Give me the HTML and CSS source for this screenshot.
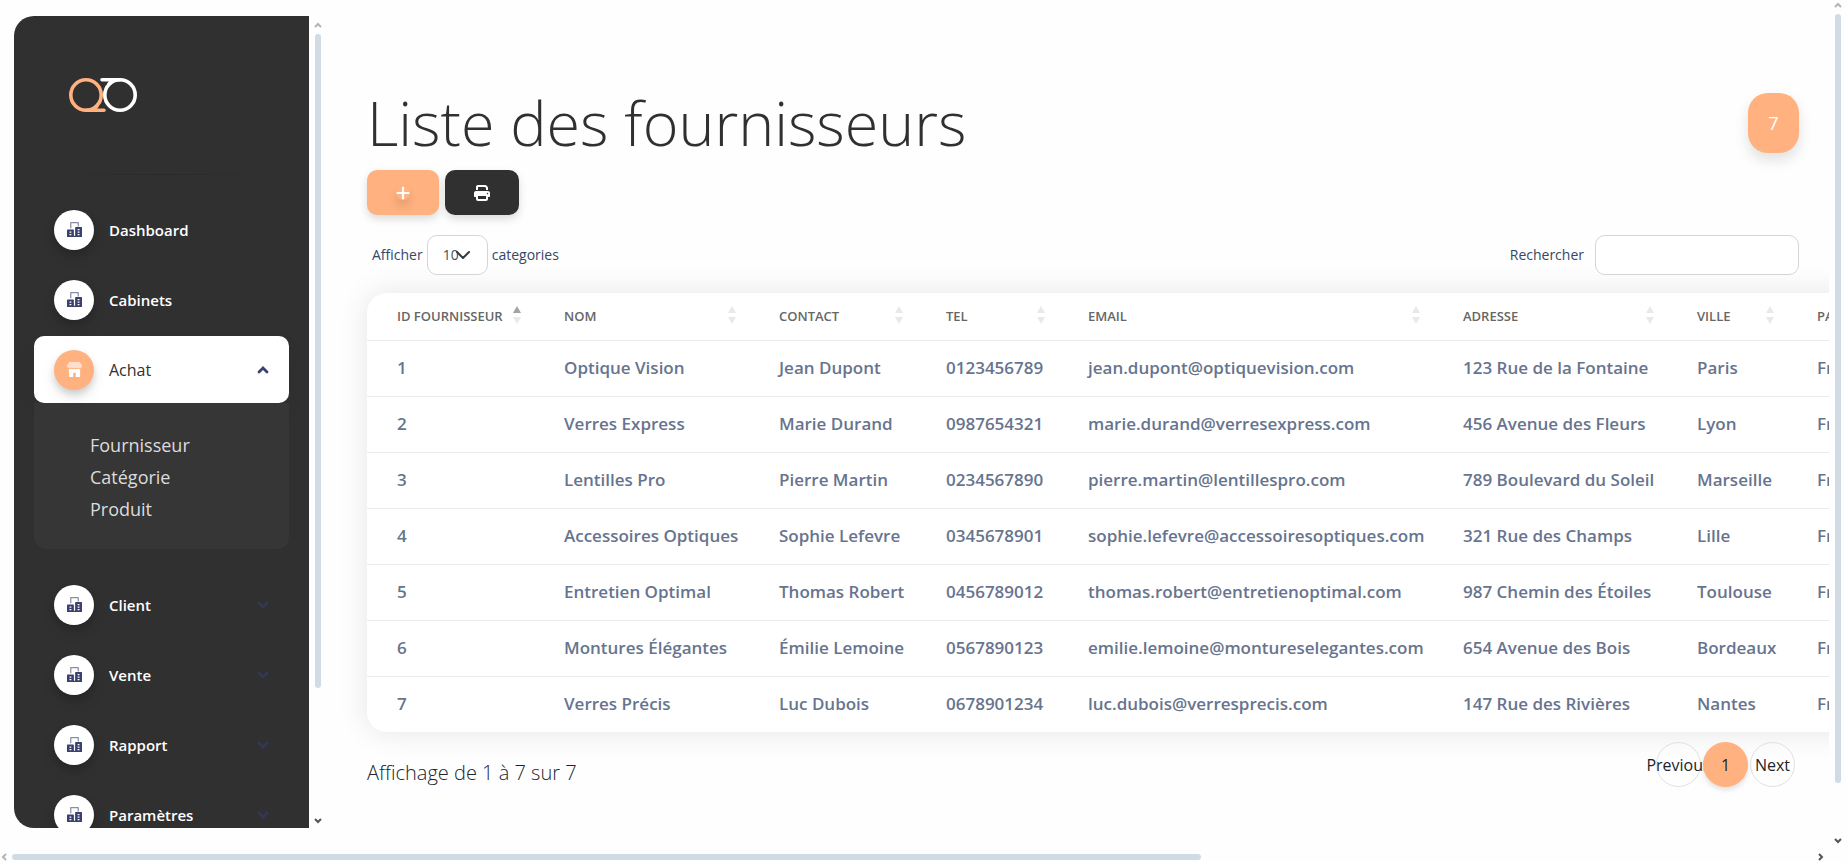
FILE: index.html
```html
<!DOCTYPE html>
<html lang="fr">
<head>
<meta charset="utf-8">
<title>Liste des fournisseurs</title>
<link rel="stylesheet" href="styles.css">
</head>
<body>
<svg class="defs" aria-hidden="true">
  <symbol id="office" viewBox="0 0 42 42">
    <path opacity=".6" d="M12.25,17.5 L8.75,17.5 L8.75,1.75 C8.75,0.78 9.53,0 10.5,0 L31.5,0 C32.47,0 33.25,0.78 33.25,1.75 L33.25,12.25 L29.75,12.25 L29.75,3.5 L12.25,3.5 Z"/>
    <path fill-rule="evenodd" d="M40.25,14 L24.5,14 C23.53,14 22.75,14.78 22.75,15.75 L22.75,38.5 L19.25,38.5 L19.25,22.75 C19.25,21.78 18.47,21 17.5,21 L1.75,21 C0.78,21 0,21.78 0,22.75 L0,40.25 C0,41.22 0.78,42 1.75,42 L40.25,42 C41.22,42 42,41.22 42,40.25 L42,15.75 C42,14.78 41.22,14 40.25,14 Z M12.25,36.75 L7,36.75 L7,33.25 L12.25,33.25 Z M12.25,29.75 L7,29.75 L7,26.25 L12.25,26.25 Z M35,36.75 L29.75,36.75 L29.75,33.25 L35,33.25 Z M35,29.75 L29.75,29.75 L29.75,26.25 L35,26.25 Z M35,22.75 L29.75,22.75 L29.75,19.25 L35,19.25 Z"/>
  </symbol>
  <symbol id="shop" viewBox="0 0 47 47">
    <path opacity=".6" d="M46.72,10.74 L40.84,0.95 C40.49,0.36 39.85,0 39.17,0 L7.83,0 C7.15,0 6.51,0.36 6.16,0.95 L0.28,10.74 C0.1,11.05 0,11.39 0,11.75 C0,16.07 3.48,19.57 7.8,19.58 C9.75,19.59 11.62,18.87 13.05,17.58 C16.02,20.26 20.53,20.26 23.49,17.58 C26.46,20.26 30.98,20.26 33.95,17.58 C36.24,19.65 39.54,20.17 42.37,18.91 C45.19,17.65 47,14.84 47,11.75 C47,11.39 46.9,11.05 46.72,10.74 Z"/>
    <path d="M39.2,22.49 C37.38,22.49 35.58,22.01 33.95,21.1 C31.14,22.68 27.93,22.93 24.98,21.8 C24.48,21.61 23.98,21.37 23.5,21.1 C20.7,22.69 17.48,22.93 14.54,21.8 C14.03,21.61 13.53,21.37 13.05,21.1 C11.43,22.02 9.63,22.49 7.82,22.49 C7.17,22.48 6.52,22.42 5.88,22.29 L5.88,44.72 C5.88,45.95 6.75,46.95 7.83,46.95 L19.58,46.95 L19.58,33.61 L27.42,33.61 L27.42,46.95 L39.17,46.95 C40.25,46.95 41.13,45.95 41.13,44.72 L41.13,22.28 C40.49,22.41 39.84,22.48 39.2,22.49 Z"/>
  </symbol>
  <symbol id="chevron" viewBox="0 0 12 8"><path d="M2 2 6 6 10 2" fill="none" stroke="currentColor" stroke-width="2.8" stroke-linecap="round"/></symbol>
  <symbol id="arrow" viewBox="0 0 8 6"><path d="M1 5 4 2 7 5" fill="none" stroke="currentColor" stroke-width="2"/></symbol>
  <symbol id="sort" viewBox="0 0 8 18"><path fill="var(--sort-up)" d="M0 7 4 0 8 7Z"/><path fill="var(--sort-down)" d="M0 11 4 18 8 11Z"/></symbol>
</svg>

<div class="page">
  <aside class="sidebar">
    <a class="brand" href="#" aria-label="Accueil">
      <svg class="logo" viewBox="0 0 68 34" fill="none" stroke-width="3.6" stroke-linecap="round">
        <circle cx="17" cy="17" r="15.2" stroke="#ffb17f"/>
        <path d="M17 32.2H35M28 28 25 31" stroke="#ffb17f"/>
        <circle cx="51" cy="17" r="15.2" stroke="#fff"/>
        <path d="M51 1.8H33M40 6 43 3" stroke="#fff"/>
      </svg>
    </a>
    <hr class="divider">
    <nav class="menu">
      <a class="item" href="#"><span class="badge-icon"><svg><use href="#office"/></svg></span>Dashboard</a>
      <a class="item" href="#"><span class="badge-icon"><svg><use href="#office"/></svg></span>Cabinets</a>
      <div class="group">
        <a class="item active" href="#"><span class="badge-icon"><svg><use href="#shop"/></svg></span>Achat<svg class="caret"><use href="#chevron"/></svg></a>
        <div class="submenu">
          <a href="#">Fournisseur</a>
          <a href="#">Catégorie</a>
          <a href="#">Produit</a>
        </div>
      </div>
      <a class="item" href="#"><span class="badge-icon"><svg><use href="#office"/></svg></span>Client<svg class="caret"><use href="#chevron"/></svg></a>
      <a class="item" href="#"><span class="badge-icon"><svg><use href="#office"/></svg></span>Vente<svg class="caret"><use href="#chevron"/></svg></a>
      <a class="item" href="#"><span class="badge-icon"><svg><use href="#office"/></svg></span>Rapport<svg class="caret"><use href="#chevron"/></svg></a>
      <a class="item" href="#"><span class="badge-icon"><svg><use href="#office"/></svg></span>Paramètres<svg class="caret"><use href="#chevron"/></svg></a>
    </nav>
  </aside>
  <div class="vbar side-bar"><svg class="off"><use href="#arrow"/></svg><div class="track"><div class="thumb side-thumb"></div></div><svg class="down"><use href="#arrow"/></svg></div>

  <main class="content">
    <header class="title-row">
      <h1>Liste des fournisseurs</h1>
      <span class="count">7</span>
    </header>
    <div class="actions">
      <button class="btn add" type="button" aria-label="Ajouter"><svg viewBox="0 0 14 14"><path d="M7 1.5v11M1.5 7h11" stroke="#fff" stroke-width="2.2" stroke-linecap="round"/></svg></button>
      <button class="btn print" type="button" aria-label="Imprimer"><svg viewBox="0 0 512 512"><path fill="#fff" d="M128 0C92.7 0 64 28.7 64 64v96h64V64H354.7L384 93.3V160h64V93.3c0-17-6.7-33.3-18.7-45.3L400 18.7C388 6.7 371.7 0 354.7 0H128zM384 352v96H128V352H384zm64 32h32c17.7 0 32-14.3 32-32V256c0-35.3-28.7-64-64-64H64c-35.3 0-64 28.7-64 64v96c0 17.7 14.3 32 32 32H64v64c0 35.3 28.7 64 64 64H384c35.3 0 64-28.7 64-64V384zM432 248a24 24 0 1 1 0 48 24 24 0 1 1 0-48z"/></svg></button>
    </div>
    <div class="filters">
      <label class="length">Afficher
        <span class="select-wrap"><select><option>10</option><option>25</option><option>50</option></select><svg viewBox="0 0 14 9"><path d="M1 1l6 6 6-6" fill="none" stroke="#343a40" stroke-width="2" stroke-linecap="round" stroke-linejoin="round"/></svg></span>
        categories</label>
      <label class="search">Rechercher <input type="search"></label>
    </div>
    <div class="card">
      <table>
        <colgroup><col class="c-id"><col class="c-nom"><col class="c-contact"><col class="c-tel"><col class="c-email"><col class="c-adresse"><col class="c-ville"><col class="c-pays"></colgroup>
        <thead>
          <tr>
            <th><div class="head sorted">ID FOURNISSEUR<svg><use href="#sort"/></svg></div></th>
            <th><div class="head">NOM<svg><use href="#sort"/></svg></div></th>
            <th><div class="head">CONTACT<svg><use href="#sort"/></svg></div></th>
            <th><div class="head">TEL<svg><use href="#sort"/></svg></div></th>
            <th><div class="head">EMAIL<svg><use href="#sort"/></svg></div></th>
            <th><div class="head">ADRESSE<svg><use href="#sort"/></svg></div></th>
            <th><div class="head">VILLE<svg><use href="#sort"/></svg></div></th>
            <th><div class="head">PAYS<svg><use href="#sort"/></svg></div></th>
          </tr>
        </thead>
        <tbody>
          <tr><td>1</td><td>Optique Vision</td><td>Jean Dupont</td><td>0123456789</td><td>jean.dupont@optiquevision.com</td><td>123 Rue de la Fontaine</td><td>Paris</td><td>France</td></tr>
          <tr><td>2</td><td>Verres Express</td><td>Marie Durand</td><td>0987654321</td><td>marie.durand@verresexpress.com</td><td>456 Avenue des Fleurs</td><td>Lyon</td><td>France</td></tr>
          <tr><td>3</td><td>Lentilles Pro</td><td>Pierre Martin</td><td>0234567890</td><td>pierre.martin@lentillespro.com</td><td>789 Boulevard du Soleil</td><td>Marseille</td><td>France</td></tr>
          <tr><td>4</td><td>Accessoires Optiques</td><td>Sophie Lefevre</td><td>0345678901</td><td>sophie.lefevre@accessoiresoptiques.com</td><td>321 Rue des Champs</td><td>Lille</td><td>France</td></tr>
          <tr><td>5</td><td>Entretien Optimal</td><td>Thomas Robert</td><td>0456789012</td><td>thomas.robert@entretienoptimal.com</td><td>987 Chemin des Étoiles</td><td>Toulouse</td><td>France</td></tr>
          <tr><td>6</td><td>Montures Élégantes</td><td>Émilie Lemoine</td><td>0567890123</td><td>emilie.lemoine@montureselegantes.com</td><td>654 Avenue des Bois</td><td>Bordeaux</td><td>France</td></tr>
          <tr><td>7</td><td>Verres Précis</td><td>Luc Dubois</td><td>0678901234</td><td>luc.dubois@verresprecis.com</td><td>147 Rue des Rivières</td><td>Nantes</td><td>France</td></tr>
        </tbody>
      </table>
    </div>
    <footer class="table-foot">
      <p>Affichage de 1 à 7 sur 7</p>
      <nav class="pager" aria-label="Pagination"><a href="#">Previous</a><a class="current" href="#">1</a><a href="#">Next</a></nav>
    </footer>
  </main>
  <div class="vbar"><svg class="off"><use href="#arrow"/></svg><div class="track"><div class="thumb page-thumb"></div></div><svg class="down"><use href="#arrow"/></svg></div>
</div>
<div class="hbar"><svg class="left off"><use href="#arrow"/></svg><div class="track"><div class="thumb"></div></div><svg class="right"><use href="#arrow"/></svg></div>
</body>
</html>
```
FILE: styles.css
```css
* { box-sizing: border-box; }
body {
  margin: 0;
  height: 100vh;
  display: flex;
  flex-direction: column;
  overflow: hidden;
  background: #fefefe;
  color: #212529;
  font: 400 16px/24px "Open Sans", "Noto Sans", sans-serif;
}
a { color: inherit; text-decoration: none; }
.defs { position: absolute; width: 0; height: 0; }
.page { flex: 1; min-height: 0; display: flex; }

/* Sidebar */
.sidebar {
  flex: none;
  width: 295px;
  margin: 16px 0 16px 14px;
  padding: 0 20px;
  overflow: hidden;
  background: #303030;
  border-radius: 20px 0 0 20px;
}
.brand { display: block; padding: 62px 0 0 35px; }
.logo { display: block; width: 68px; height: 34px; }
.divider {
  height: 1px;
  margin: 62px 20px 21px;
  border: 0;
  background: linear-gradient(90deg, transparent, #292929, transparent);
}
.menu { display: flex; flex-direction: column; gap: 3px; }
.item {
  height: 67px;
  padding: 0 20px;
  display: flex;
  align-items: center;
  gap: 15px;
  border-radius: 10px;
  color: #fff;
  font-size: 15px;
  font-weight: 600;
}
.badge-icon {
  width: 40px;
  height: 40px;
  display: grid;
  place-items: center;
  border-radius: 50%;
  background: #fff;
  color: #3a416f;
  box-shadow: 0 4px 6px rgba(0, 0, 0, .12), 0 7px 14px rgba(0, 0, 0, .1);
}
.badge-icon svg { width: 15px; height: 15px; fill: currentColor; }
.caret { width: 12px; height: 8px; margin-left: auto; color: #343754; }
.active { background: #fff; color: #303030; font-size: 16px; font-weight: 500; box-shadow: 0 8px 20px rgba(0, 0, 0, .05); }
.active .badge-icon { background: #ffb17f; color: #fff; }
.active .caret { color: #3a416f; transform: rotate(180deg); }
.group { margin-bottom: 19px; }
.submenu {
  height: 146px;
  padding: 26px 56px;
  background: #363636;
  border-radius: 0 0 12px 12px;
  color: #dcdcdc;
  font-size: 18px;
  line-height: 32px;
}
.submenu a { display: block; }

/* Scrollbars */
.vbar {
  flex: none;
  width: 18px;
  padding: 2px 0 0;
  display: flex;
  flex-direction: column;
  align-items: center;
  gap: 6px;
  color: #555;
}
.side-bar { padding: 22px 0 20px; }
.track { flex: 1; }
.thumb { border-radius: 3px; background: #d0dbe4; }
.vbar svg, .hbar svg { width: 8px; height: 6px; }
.vbar .thumb { width: 6px; }
.side-thumb { height: 84%; }
.page-thumb { height: 94%; }
.down { transform: rotate(180deg); }
.off { color: #b5b5b5; }
.hbar { flex: none; height: 18px; padding: 7px 22px 0 0; display: flex; align-items: center; gap: 4px; color: #555; }
.hbar .thumb { width: 66%; height: 6px; }
.left { transform: rotate(-90deg); }
.right { transform: rotate(90deg); }

/* Content */
.content { flex: 1; min-width: 0; overflow: hidden; padding: 80px 30px 0 40px; }
.title-row { display: flex; align-items: center; justify-content: space-between; height: 86px; }
h1 { margin: 0; color: #303030; font-size: 61px; font-weight: 300; line-height: 86px; white-space: nowrap; }
.count {
  width: 51px;
  height: 60px;
  display: grid;
  place-items: center;
  border-radius: 20px;
  background: #ffb17f;
  color: #fff;
  font-size: 18px;
  box-shadow: 0 7px 14px rgba(0, 0, 0, .12);
}
.actions { display: flex; gap: 6px; margin: 4px 0 20px; }
.btn {
  height: 45px;
  padding: 0 29px;
  display: grid;
  place-items: center;
  border: 0;
  border-radius: 10px;
  box-shadow: 0 4px 8px rgba(0, 0, 0, .14);
}
.btn svg { width: 16px; height: 16px; }
.add { background: #ffb17f; }
.add svg { width: 14px; height: 14px; border-radius: 50%; box-shadow: 0 6px 10px rgba(0, 0, 0, .12); }
.print { background: #303030; }
.filters {
  display: flex;
  justify-content: space-between;
  color: #344767;
  font-size: 14px;
  font-weight: 400;
}
.length { display: flex; align-items: center; gap: 4px; padding-left: 5px; }
.search { display: flex; align-items: center; gap: 11px; }
.select-wrap { position: relative; display: flex; }
.select-wrap svg { position: absolute; left: 29px; top: 16px; width: 14px; height: 9px; pointer-events: none; }
select, input {
  height: 40px;
  border: 1px solid #d2d6da;
  border-radius: 10px;
  background: #fff;
  color: #495057;
  font: 400 14px/20px "Open Sans", sans-serif;
  outline: 0;
}
select { width: 61px; padding: 0 15px; appearance: none; }
input { width: 204px; padding: 0 12px; }

.card {
  width: max-content;
  margin-top: 18px;
  overflow: hidden;
  border-radius: 20px;
  background: #fff;
  box-shadow: 0 0 30px rgba(0, 0, 0, .1);
}
table { width: 1570px; border-collapse: collapse; table-layout: fixed; }
.c-id, .c-contact { width: 167px; }
.c-nom { width: 215px; }
.c-tel { width: 142px; }
.c-email { width: 375px; }
.c-adresse { width: 234px; }
.c-ville { width: 120px; }
.c-pays { width: 150px; }
th { height: 47px; padding: 0 13px 0 30px; color: #666; font-size: 13px; font-weight: 600; text-align: left; }
.head {
  --sort-up: #e9e9e9;
  --sort-down: #e9e9e9;
  display: flex;
  align-items: center;
  justify-content: space-between;
  white-space: nowrap;
}
.sorted { --sort-up: #a3a3a3; }
.head svg { flex: none; width: 8px; height: 18px; margin-bottom: 2px; }
td {
  height: 56px;
  padding: 0 0 0 30px;
  border-top: 1px solid #e9ecef;
  color: #67748e;
  font-size: 17px;
  font-weight: 600;
  white-space: nowrap;
}
.table-foot { display: flex; justify-content: space-between; padding-top: 10px; }
.table-foot p { margin: 19px 0 0; font-size: 20px; font-weight: 300; }
.pager { display: flex; gap: 2px; padding-right: 4px; font-size: 16px; font-weight: 400; }
.pager a {
  width: 45px;
  height: 45px;
  display: flex;
  align-items: center;
  justify-content: center;
  border: 1px solid #dee2e6;
  border-radius: 50%;
  white-space: nowrap;
}
.pager .current { z-index: 1; border-color: #ffb17f; background: #ffb17f; box-shadow: 0 3px 5px rgba(0, 0, 0, .12); }
```
